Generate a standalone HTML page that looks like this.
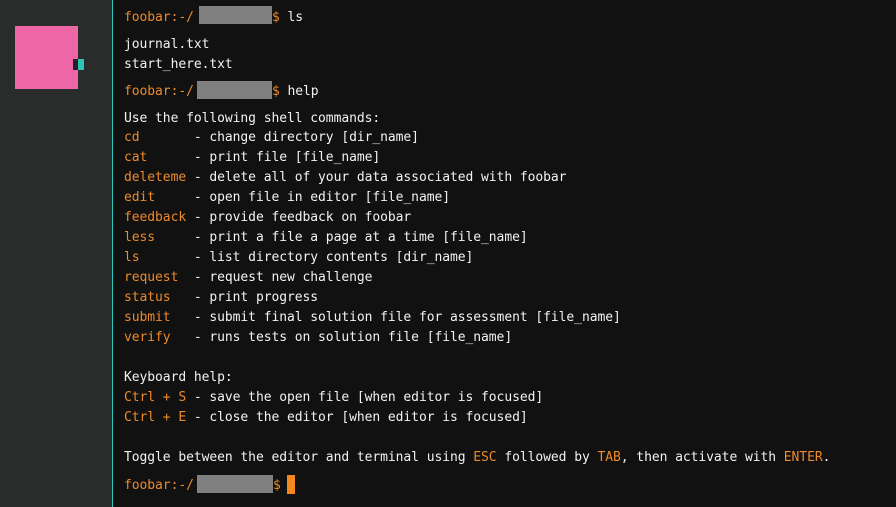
<!DOCTYPE html>
<html><head><meta charset="utf-8"><style>
body{margin:0;width:896px;height:507px;background:#111;overflow:hidden;position:relative;font-family:"DejaVu Sans Mono",monospace;font-size:13px;color:#f2f2f2}
#side{position:absolute;left:0;top:0;width:112px;height:507px;background:#2a2b2b;border-right:1px solid #2fc4b8}
.sq{position:absolute;left:15px;top:26px;width:63px;height:63px;background:#ef66a6}
.d{position:absolute;left:73px;top:59px;width:5px;height:11px;background:#222}
.t{position:absolute;left:78px;top:59px;width:6px;height:11px;background:#2fc4b8}
.l{position:absolute;left:124px;line-height:20px;white-space:pre;letter-spacing:-0.065px;margin-top:2px}
.o{color:#ec8a2c}
.g{position:absolute;background:#808080;height:18px}
.cur{position:absolute;left:287px;top:475px;width:8px;height:19px;background:#f5871f}
</style></head><body>
<div id="side"><div class="sq"></div><div class="d"></div><div class="t"></div></div>
<div class="l o" style="top:6px">foobar:-/</div><div class="g" style="left:199px;top:6px;width:73px"></div><div class="l" style="top:6px;left:272px"><span class="o">$</span> ls</div>
<div class="l" style="top:33px">journal.txt</div>
<div class="l" style="top:53px">start_here.txt</div>
<div class="l o" style="top:80px">foobar:-/</div><div class="g" style="left:197px;top:81px;width:75px"></div><div class="l" style="top:80px;left:272px"><span class="o">$</span> help</div>
<div class="l" style="top:107px">Use the following shell commands:</div>
<div class="l" style="top:126px"><span class="o">cd      </span> - change directory [dir_name]</div>
<div class="l" style="top:146px"><span class="o">cat     </span> - print file [file_name]</div>
<div class="l" style="top:166px"><span class="o">deleteme</span> - delete all of your data associated with foobar</div>
<div class="l" style="top:186px"><span class="o">edit    </span> - open file in editor [file_name]</div>
<div class="l" style="top:206px"><span class="o">feedback</span> - provide feedback on foobar</div>
<div class="l" style="top:226px"><span class="o">less    </span> - print a file a page at a time [file_name]</div>
<div class="l" style="top:246px"><span class="o">ls      </span> - list directory contents [dir_name]</div>
<div class="l" style="top:266px"><span class="o">request </span> - request new challenge</div>
<div class="l" style="top:286px"><span class="o">status  </span> - print progress</div>
<div class="l" style="top:306px"><span class="o">submit  </span> - submit final solution file for assessment [file_name]</div>
<div class="l" style="top:326px"><span class="o">verify  </span> - runs tests on solution file [file_name]</div>
<div class="l" style="top:366px">Keyboard help:</div>
<div class="l" style="top:386px"><span class="o">Ctrl + S</span> - save the open file [when editor is focused]</div>
<div class="l" style="top:406px"><span class="o">Ctrl + E</span> - close the editor [when editor is focused]</div>
<div class="l" style="top:446px">Toggle between the editor and terminal using <span class="o">ESC</span> followed by <span class="o">TAB</span>, then activate with <span class="o">ENTER</span>.</div>
<div class="l o" style="top:474px">foobar:-/</div><div class="g" style="left:197px;top:475px;width:76px"></div><div class="l o" style="top:474px;left:273px">$</div>
<div class="cur"></div>
</body></html>
